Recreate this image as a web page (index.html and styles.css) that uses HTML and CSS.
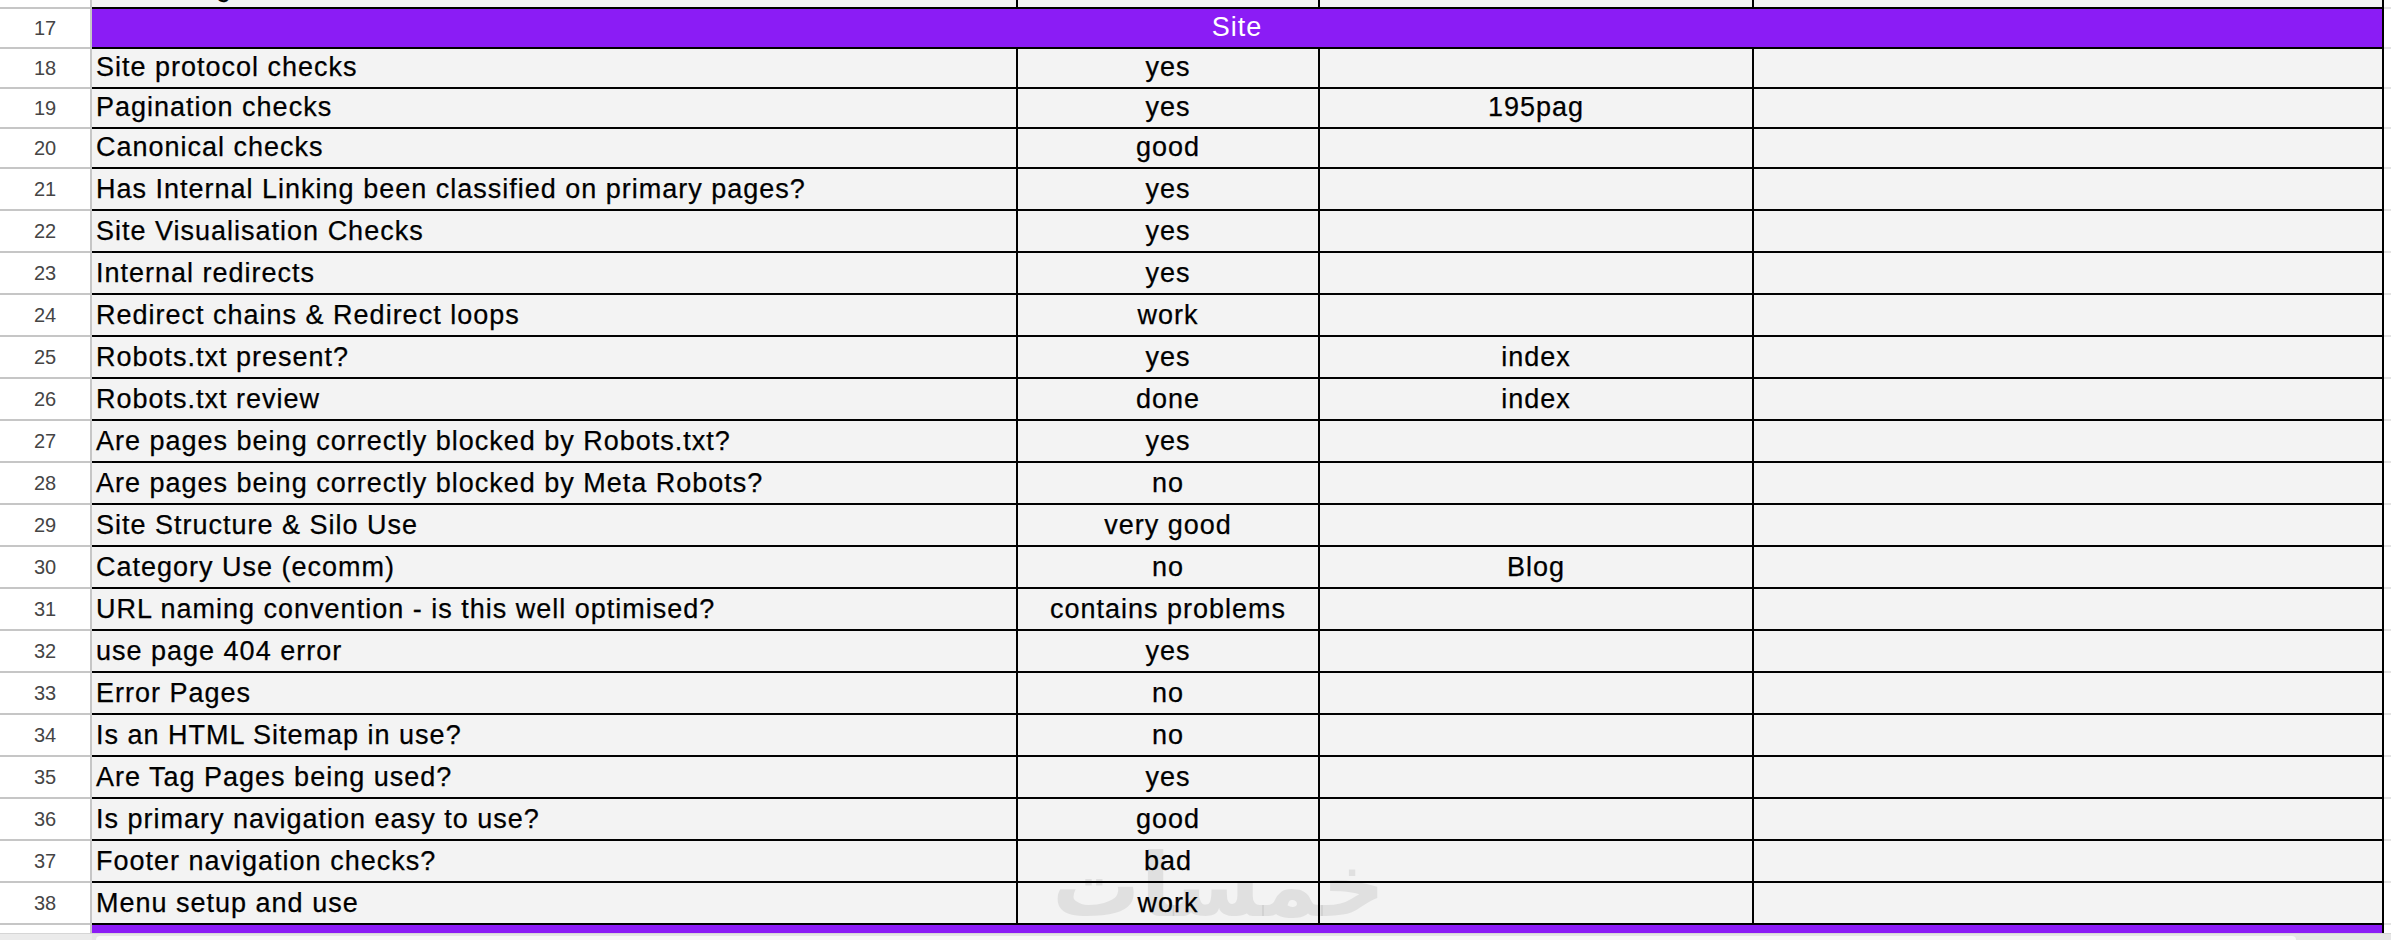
FILE: index.html
```html
<!DOCTYPE html>
<html lang="en">
<head>
<meta charset="utf-8">
<title>Site audit</title>
<link rel="stylesheet" href="styles.css">
</head>
<body>
<div class="sheet">
  <div class="row h9">
    <div class="num"></div>
    <div class="cell">Monitoring</div>
    <div class="cell c"></div>
    <div class="cell c"></div>
    <div class="cell"></div>
    <div class="pad"></div>
  </div>
  <div class="row h40">
    <div class="num">17</div>
    <div class="cell head">Site</div>
    <div class="pad"></div>
  </div>
  <div class="row h40">
    <div class="num">18</div>
    <div class="cell">Site protocol checks</div>
    <div class="cell c">yes</div>
    <div class="cell c"></div>
    <div class="cell"></div>
    <div class="pad"></div>
  </div>
  <div class="row h40">
    <div class="num">19</div>
    <div class="cell">Pagination checks</div>
    <div class="cell c">yes</div>
    <div class="cell c">195pag</div>
    <div class="cell"></div>
    <div class="pad"></div>
  </div>
  <div class="row h40">
    <div class="num">20</div>
    <div class="cell">Canonical checks</div>
    <div class="cell c">good</div>
    <div class="cell c"></div>
    <div class="cell"></div>
    <div class="pad"></div>
  </div>
  <div class="row">
    <div class="num">21</div>
    <div class="cell">Has Internal Linking been classified on primary pages?</div>
    <div class="cell c">yes</div>
    <div class="cell c"></div>
    <div class="cell"></div>
    <div class="pad"></div>
  </div>
  <div class="row">
    <div class="num">22</div>
    <div class="cell">Site Visualisation Checks</div>
    <div class="cell c">yes</div>
    <div class="cell c"></div>
    <div class="cell"></div>
    <div class="pad"></div>
  </div>
  <div class="row">
    <div class="num">23</div>
    <div class="cell">Internal redirects</div>
    <div class="cell c">yes</div>
    <div class="cell c"></div>
    <div class="cell"></div>
    <div class="pad"></div>
  </div>
  <div class="row">
    <div class="num">24</div>
    <div class="cell">Redirect chains &amp; Redirect loops</div>
    <div class="cell c">work</div>
    <div class="cell c"></div>
    <div class="cell"></div>
    <div class="pad"></div>
  </div>
  <div class="row">
    <div class="num">25</div>
    <div class="cell">Robots.txt present?</div>
    <div class="cell c">yes</div>
    <div class="cell c">index</div>
    <div class="cell"></div>
    <div class="pad"></div>
  </div>
  <div class="row">
    <div class="num">26</div>
    <div class="cell">Robots.txt review</div>
    <div class="cell c">done</div>
    <div class="cell c">index</div>
    <div class="cell"></div>
    <div class="pad"></div>
  </div>
  <div class="row">
    <div class="num">27</div>
    <div class="cell">Are pages being correctly blocked by Robots.txt?</div>
    <div class="cell c">yes</div>
    <div class="cell c"></div>
    <div class="cell"></div>
    <div class="pad"></div>
  </div>
  <div class="row">
    <div class="num">28</div>
    <div class="cell">Are pages being correctly blocked by Meta Robots?</div>
    <div class="cell c">no</div>
    <div class="cell c"></div>
    <div class="cell"></div>
    <div class="pad"></div>
  </div>
  <div class="row">
    <div class="num">29</div>
    <div class="cell">Site Structure &amp; Silo Use</div>
    <div class="cell c">very good</div>
    <div class="cell c"></div>
    <div class="cell"></div>
    <div class="pad"></div>
  </div>
  <div class="row">
    <div class="num">30</div>
    <div class="cell">Category Use (ecomm)</div>
    <div class="cell c">no</div>
    <div class="cell c">Blog</div>
    <div class="cell"></div>
    <div class="pad"></div>
  </div>
  <div class="row">
    <div class="num">31</div>
    <div class="cell">URL naming convention - is this well optimised?</div>
    <div class="cell c">contains problems</div>
    <div class="cell c"></div>
    <div class="cell"></div>
    <div class="pad"></div>
  </div>
  <div class="row">
    <div class="num">32</div>
    <div class="cell">use page 404 error</div>
    <div class="cell c">yes</div>
    <div class="cell c"></div>
    <div class="cell"></div>
    <div class="pad"></div>
  </div>
  <div class="row">
    <div class="num">33</div>
    <div class="cell">Error Pages</div>
    <div class="cell c">no</div>
    <div class="cell c"></div>
    <div class="cell"></div>
    <div class="pad"></div>
  </div>
  <div class="row">
    <div class="num">34</div>
    <div class="cell">Is an HTML Sitemap in use?</div>
    <div class="cell c">no</div>
    <div class="cell c"></div>
    <div class="cell"></div>
    <div class="pad"></div>
  </div>
  <div class="row">
    <div class="num">35</div>
    <div class="cell">Are Tag Pages being used?</div>
    <div class="cell c">yes</div>
    <div class="cell c"></div>
    <div class="cell"></div>
    <div class="pad"></div>
  </div>
  <div class="row">
    <div class="num">36</div>
    <div class="cell">Is primary navigation easy to use?</div>
    <div class="cell c">good</div>
    <div class="cell c"></div>
    <div class="cell"></div>
    <div class="pad"></div>
  </div>
  <div class="row">
    <div class="num">37</div>
    <div class="cell">Footer navigation checks?</div>
    <div class="cell c">bad</div>
    <div class="cell c"></div>
    <div class="cell"></div>
    <div class="pad"></div>
  </div>
  <div class="row">
    <div class="num">38</div>
    <div class="cell">Menu setup and use</div>
    <div class="cell c">work</div>
    <div class="cell c"></div>
    <div class="cell"></div>
    <div class="pad"></div>
  </div>
  <div class="row h8">
    <div class="num num-last"></div>
    <div class="cell head head-last"></div>
    <div class="pad pad-last"></div>
  </div>
  <div class="scrollbar">
    <div class="scroll-corner"></div>
    <div class="scroll-track"><div class="scroll-thumb"></div></div>
  </div>
</div>
<div class="watermark" dir="rtl">خمسات</div>
</body>
</html>
```

FILE: styles.css
```css
* {
  box-sizing: border-box;
}

html,
body {
  margin: 0;
  padding: 0;
}

body {
  width: 2391px;
  height: 940px;
  overflow: hidden;
  background: #ffffff;
  font-family: "Liberation Sans", Arial, sans-serif;
  position: relative;
}

.sheet {
  display: flex;
  flex-direction: column;
}

.row {
  display: grid;
  grid-template-columns: 92px 926px 302px 434px 630px 7px;
  height: 42px;
}

.row.h40 {
  height: 40px;
}

.row.h9 {
  height: 9px;
}

.row.h8 {
  height: 8px;
}

.num {
  background: #ffffff;
  border-right: 2px solid #c6c6c6;
  border-bottom: 2px solid #c6c6c6;
  display: flex;
  align-items: center;
  justify-content: center;
  font-size: 20px;
  color: #454545;
}

.num-last {
  border-bottom: none;
}

.cell {
  background: #f3f3f3;
  border-right: 2px solid #000000;
  border-bottom: 2px solid #000000;
  display: flex;
  align-items: flex-end;
  padding: 0 4px 6px 4px;
  font-size: 27px;
  line-height: 27px;
  letter-spacing: 1px;
  color: #000000;
  -webkit-text-stroke: 0.25px #000000;
  white-space: nowrap;
  overflow: hidden;
}

.cell.c {
  justify-content: center;
}

.head {
  grid-column: 2 / 6;
  background: #8b1cf5;
  color: #ffffff;
  -webkit-text-stroke: 0;
  justify-content: center;
}

.head-last {
  border-bottom: none;
}

.pad {
  background: #ffffff;
  border-bottom: 2px solid #e3e3e3;
}

.pad-last {
  border-bottom: none;
}

.scrollbar {
  display: flex;
  height: 7px;
  background: #e6e6e6;
  border-top: 1px solid #d6d6d6;
}

.scroll-corner {
  width: 92px;
  background: #ebebeb;
}

.scroll-track {
  flex: 1;
  padding: 2px 0 0 4px;
}

.scroll-thumb {
  height: 100%;
  width: 2200px;
  background: #f8f8f8;
  border-radius: 4px 4px 0 0;
}

.watermark {
  position: absolute;
  left: 1052px;
  top: 842px;
  font-family: "DejaVu Sans", sans-serif;
  font-weight: bold;
  font-size: 88px;
  line-height: 1;
  color: rgba(0, 0, 0, 0.075);
  pointer-events: none;
}
```
